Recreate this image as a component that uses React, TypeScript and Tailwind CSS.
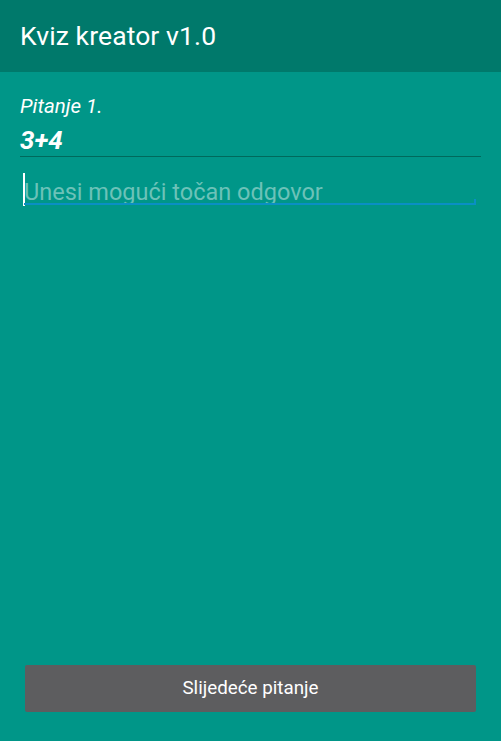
export default function App() {
  return (
    <div className="w-[501px] h-[741px] flex flex-col bg-[#009688] font-['Roboto',sans-serif] overflow-hidden">
      <div className="h-[72px] shrink-0 bg-[#00796b] flex items-center px-5">
        <h1 className="text-[26.5px] text-white leading-none tracking-[0.1px]">Kviz kreator v1.0</h1>
      </div>

      <div className="flex-1 flex flex-col px-5 pt-[22px]">
        <p className="text-[20.5px] italic text-white leading-[24px]">Pitanje 1.</p>
        <p className="text-[26px] italic font-bold text-white leading-[30px] mt-[7px]">3+4</p>
        <div className="h-px bg-[#00695c] mt-[1px]" />

        {/* answer input */}
        <div className="relative mt-[16px] ml-[3px] mr-[5px] h-[33px]">
          <div className="absolute left-0 top-0 w-[2px] h-[33px] bg-white" />
          <span className="absolute left-[1px] top-[4px] text-[23.5px] leading-[30px] text-[#6cc2b8] whitespace-nowrap">
            Unesi mogući točan odgovor
          </span>
          <div className="absolute left-[1px] right-0 bottom-[1px] h-[2px] bg-[#0a8fc4]" />
          <div className="absolute right-0 bottom-[1px] w-[2px] h-[6px] bg-[#0a8fc4]" />
        </div>

        <div className="flex-1" />

        <div className="pb-[29px] px-[5px]">
          <button className="w-full h-[47px] bg-[#5d5d5f] rounded-[2px] text-white text-[18.8px]">
            Slijedeće pitanje
          </button>
        </div>
      </div>
    </div>
  );
}
